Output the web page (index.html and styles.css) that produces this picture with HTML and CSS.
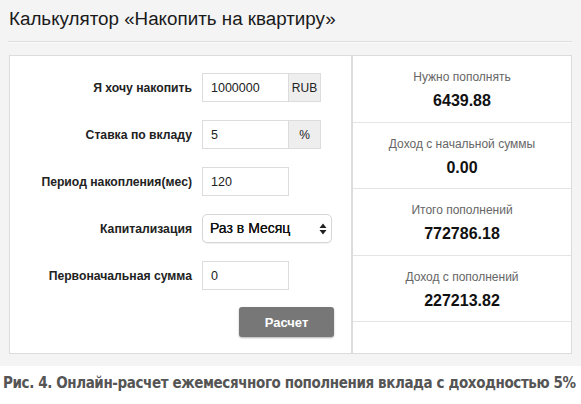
FILE: index.html
```html
<!DOCTYPE html>
<html lang="ru">
<head>
<meta charset="utf-8">
<title>Калькулятор</title>
<link rel="stylesheet" href="styles.css">
</head>
<body>
<div class="screen">
  <h1 class="title">Калькулятор «Накопить на квартиру»</h1>
  <div class="rule"></div>
  <div class="panel">
    <div class="form">
      <div class="grid">
        <label class="lbl">Я хочу накопить</label>
        <div class="group"><input class="inp" value="1000000"><span class="addon">RUB</span></div>
        <label class="lbl">Ставка по вкладу</label>
        <div class="group"><input class="inp" value="5"><span class="addon">%</span></div>
        <label class="lbl">Период накопления(мес)</label>
        <div class="group"><input class="inp" value="120"></div>
        <label class="lbl">Капитализация</label>
        <div class="selwrap">
          <div class="sel">Раз в Месяц</div>
          <svg class="arrows" width="8" height="12" viewBox="0 0 8 12"><path d="M4 0.5 L7.5 5 L0.5 5 Z M4 11.5 L7.5 7 L0.5 7 Z" fill="#222"/></svg>
        </div>
        <label class="lbl">Первоначальная сумма</label>
        <div class="group"><input class="inp" value="0"></div>
      </div>
      <div class="btnrow"><button class="btn">Расчет</button></div>
    </div>
    <div class="results">
      <div class="cell"><div class="clabel">Нужно пополнять</div><div class="cval">6439.88</div></div>
      <div class="cell"><div class="clabel">Доход с начальной суммы</div><div class="cval">0.00</div></div>
      <div class="cell"><div class="clabel">Итого пополнений</div><div class="cval">772786.18</div></div>
      <div class="cell"><div class="clabel">Доход с пополнений</div><div class="cval">227213.82</div></div>
    </div>
  </div>
</div>
<p class="caption">Рис. 4. Онлайн-расчет ежемесячного пополнения вклада с доходностью 5%</p>
</body>
</html>
```

FILE: styles.css
```css
html, body {
  margin: 0;
  padding: 0;
  background: #ffffff;
}
body {
  width: 581px;
  font-family: "Liberation Sans", Arial, sans-serif;
}
.screen {
  background: #f4f4f4;
  width: 581px;
  height: 366px;
  padding: 0 9px 0 9px;
  box-sizing: border-box;
}
.title {
  margin: 0;
  padding-top: 8px;
  height: 32px;
  box-sizing: border-box;
  font-size: 18.8px;
  line-height: 22px;
  font-weight: normal;
  color: #1a1a1a;
  white-space: nowrap;
}
.rule {
  height: 0;
  border-top: 1px solid #dedede;
  margin: 9px 0 0 -1px;
  box-shadow: 0 1px 0 #fafafa;
}
.panel {
  display: flex;
  margin-top: 13px;
  height: 299px;
}
.form {
  flex: 0 0 343px;
  box-sizing: border-box;
  background: #fff;
  border: 1px solid #dcdcdc;
  padding-top: 17px;
}
.grid {
  display: grid;
  grid-template-columns: 182px auto;
  column-gap: 10px;
  row-gap: 18px;
  align-items: center;
}
.lbl {
  text-align: right;
  font-weight: bold;
  font-size: 12.2px;
  color: #222;
}
.group {
  display: flex;
  height: 29px;
}
.inp {
  width: 87px;
  height: 29px;
  box-sizing: border-box;
  border: 1px solid #dcdcdc;
  padding: 0 8px;
  font-family: "Liberation Sans", Arial, sans-serif;
  font-size: 12.5px;
  color: #222;
  background: #fff;
  outline: none;
  margin: 0;
}
.addon {
  width: 32px;
  height: 29px;
  box-sizing: border-box;
  border: 1px solid #dcdcdc;
  border-left: none;
  background: #eeeeee;
  font-size: 12px;
  color: #222;
  display: flex;
  align-items: center;
  justify-content: center;
}
.selwrap {
  position: relative;
  width: 130px;
  height: 29px;
}
.sel {
  width: 130px;
  height: 29px;
  box-sizing: border-box;
  border: 1px solid #d6d6d6;
  border-radius: 5px;
  background: #fff;
  padding-left: 7px;
  font-family: "Liberation Sans", Arial, sans-serif;
  font-size: 14px;
  line-height: 27px;
  color: #111;
  text-shadow: 0 0 0.3px #111;
  box-shadow: 0 1px 1px rgba(0,0,0,0.06);
}
.arrows {
  position: absolute;
  right: 5px;
  top: 9px;
}
.btnrow {
  margin-top: 17px;
  padding-left: 229px;
}
.btn {
  width: 95px;
  height: 30px;
  border: none;
  border-radius: 3px;
  background: #777777;
  color: #fff;
  font-family: "Liberation Sans", Arial, sans-serif;
  font-weight: bold;
  font-size: 13px;
  box-shadow: 0 1px 2px rgba(0,0,0,0.3);
  padding: 0;
}
.results {
  flex: 0 0 220px;
  box-sizing: border-box;
  background: #fff;
  border: 1px solid #dcdcdc;
}
.cell {
  height: 66.5px;
  box-sizing: border-box;
  border-bottom: 1px solid #e4e4e4;
  text-align: center;
  padding-top: 14px;
}
.clabel {
  font-size: 12px;
  line-height: 15px;
  color: #666;
}
.cval {
  margin-top: 6px;
  font-size: 16px;
  line-height: 20px;
  font-weight: bold;
  color: #111;
}
.caption {
  margin: 8px 0 0 3px;
  font-family: "DejaVu Sans", sans-serif;
  font-stretch: condensed;
  font-weight: bold;
  font-size: 15px;
  letter-spacing: -0.4px;
  line-height: 18px;
  color: #555;
  white-space: nowrap;
}
```
